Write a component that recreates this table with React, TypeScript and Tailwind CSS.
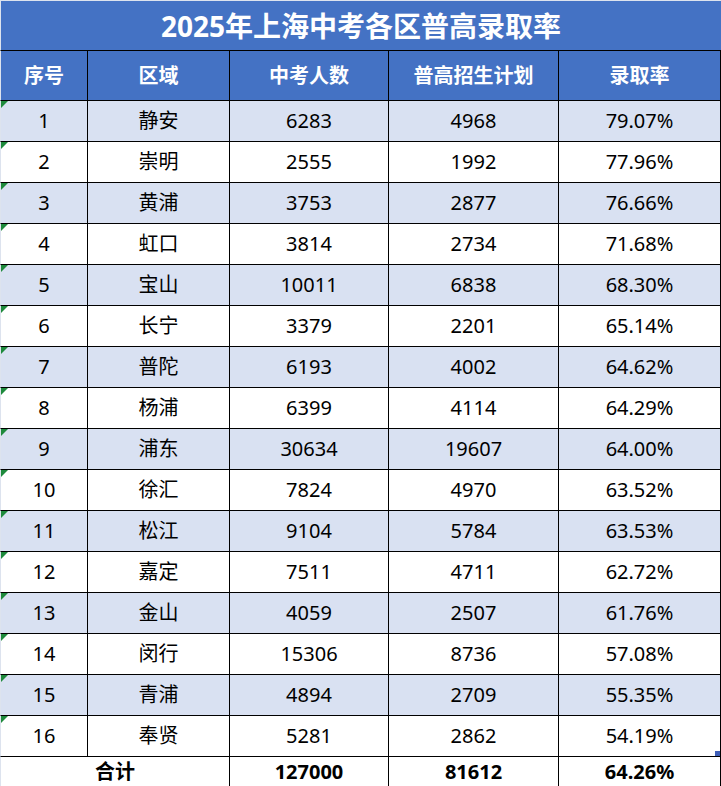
import React from "react";

const rows: [string, string, string, string, string][] = [
  ["1", "静安", "6283", "4968", "79.07%"],
  ["2", "崇明", "2555", "1992", "77.96%"],
  ["3", "黄浦", "3753", "2877", "76.66%"],
  ["4", "虹口", "3814", "2734", "71.68%"],
  ["5", "宝山", "10011", "6838", "68.30%"],
  ["6", "长宁", "3379", "2201", "65.14%"],
  ["7", "普陀", "6193", "4002", "64.62%"],
  ["8", "杨浦", "6399", "4114", "64.29%"],
  ["9", "浦东", "30634", "19607", "64.00%"],
  ["10", "徐汇", "7824", "4970", "63.52%"],
  ["11", "松江", "9104", "5784", "63.53%"],
  ["12", "嘉定", "7511", "4711", "62.72%"],
  ["13", "金山", "4059", "2507", "61.76%"],
  ["14", "闵行", "15306", "8736", "57.08%"],
  ["15", "青浦", "4894", "2709", "55.35%"],
  ["16", "奉贤", "5281", "2862", "54.19%"],
];

const headers = ["序号", "区域", "中考人数", "普高招生计划", "录取率"];

export default function App() {
  return (
    <div
      className="w-[721px] h-[786px] bg-white overflow-hidden text-black"
      style={{ fontFamily: '"Noto Sans", "Noto Sans CJK SC", sans-serif' }}
    >
      <div className="h-[51px] bg-[#4472C4] border-t border-l border-[#dde3ee] border-b border-b-black flex items-center justify-center">
        <span className="text-white font-bold text-[28px] leading-none pt-[1px]">
          2025年上海中考各区普高录取率
        </span>
      </div>
      <div className="grid grid-cols-[88px_142px_159px_170px_162px]">
        {headers.map((h, i) => (
          <div
            key={h}
            className={`h-[50px] bg-[#4472C4] border-b border-black flex items-center justify-center text-white font-bold text-[20px] ${
              i === 0 ? "border-l border-l-[#dde3ee]" : ""
            } border-r border-r-black`}
          >
            {h}
          </div>
        ))}
        {rows.map((r, ri) => (
          <React.Fragment key={r[0]}>
            {r.map((c, ci) => (
              <div
                key={ci}
                className={`relative h-[41px] border-b border-r border-black flex items-center justify-center text-[20px] ${
                  ri % 2 === 0 ? "bg-[#D9E1F2]" : "bg-white"
                } ${ci === 0 ? "border-l border-l-[#dde3ee]" : ""}`}
              >
                {ci === 0 && (
                  <span className="absolute left-0 top-0 w-0 h-0 border-t-[7px] border-t-[#1e8a3c] border-r-[7px] border-r-transparent" />
                )}
                {ci === 4 && ri === 15 && (
                  <span className="absolute right-0 bottom-0 w-[5px] h-[5px] bg-[#3f5fb8]" />
                )}
                {c}
              </div>
            ))}
          </React.Fragment>
        ))}
        <div className="col-span-2 h-[30px] border-r border-black border-l border-l-[#dde3ee] border-b border-b-[#d0d0d0] flex items-center justify-center font-bold text-[20px]">
          合计
        </div>
        <div className="h-[30px] border-r border-black border-b border-b-[#d0d0d0] flex items-center justify-center font-bold text-[20px]">
          127000
        </div>
        <div className="h-[30px] border-r border-black border-b border-b-[#d0d0d0] flex items-center justify-center font-bold text-[20px]">
          81612
        </div>
        <div className="h-[30px] border-r border-black border-b border-b-[#d0d0d0] flex items-center justify-center font-bold text-[20px]">
          64.26%
        </div>
      </div>
    </div>
  );
}
